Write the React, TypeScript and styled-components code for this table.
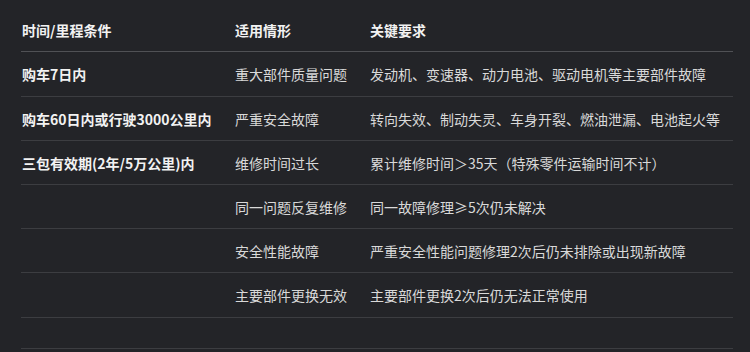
import React from 'react';
import styled, { createGlobalStyle } from 'styled-components';

const GlobalStyle = createGlobalStyle`
  html, body {
    margin: 0;
    padding: 0;
    background: #232428;
  }
  body {
    font-family: "Noto Sans CJK SC", "Noto Sans", sans-serif;
  }
`;

const Page = styled.div`
  padding: 8px 17px 0 21px;
  min-height: 352px;
  box-sizing: border-box;
  background: #232428;
`;

const Table = styled.table`
  width: 100%;
  border-collapse: collapse;
  table-layout: fixed;
  font-size: 14px;
  line-height: 20px;
`;

const HeadCell = styled.th<{ $w?: number }>`
  width: ${(p) => (p.$w ? `${p.$w}px` : 'auto')};
  height: 43px;
  padding: 0 0 0 1px;
  text-align: left;
  font-weight: 700;
  color: #f2f2f2;
  border-bottom: 1px solid #505155;
`;

const Row = styled.tr<{ $h: number }>`
  height: ${(p) => p.$h}px;
  border-bottom: 1px solid #3c3d41;
`;

const Cell = styled.td<{ $strong?: boolean }>`
  padding: 0 0 0 1px;
  vertical-align: middle;
  white-space: nowrap;
  font-weight: ${(p) => (p.$strong ? 700 : 400)};
  color: ${(p) => (p.$strong ? '#f2f2f2' : '#d9d9d9')};
`;

const rows = [
  ['购车7日内', '重大部件质量问题', '发动机、变速器、动力电池、驱动电机等主要部件故障'],
  ['购车60日内或行驶3000公里内', '严重安全故障', '转向失效、制动失灵、车身开裂、燃油泄漏、电池起火等'],
  ['三包有效期(2年/5万公里)内', '维修时间过长', '累计维修时间＞35天（特殊零件运输时间不计）'],
  ['', '同一问题反复维修', '同一故障修理≥5次仍未解决'],
  ['', '安全性能故障', '严重安全性能问题修理2次后仍未排除或出现新故障'],
  ['', '主要部件更换无效', '主要部件更换2次后仍无法正常使用'],
  ['', '', ''],
];

const heights = [45, 44, 44, 44, 44, 45, 31];

export default function App() {
  return (
    <>
      <GlobalStyle />
      <Page>
        <Table>
          <thead>
            <tr>
              <HeadCell $w={212}>时间/里程条件</HeadCell>
              <HeadCell $w={134}>适用情形</HeadCell>
              <HeadCell>关键要求</HeadCell>
            </tr>
          </thead>
          <tbody>
            {rows.map((r, i) => (
              <Row key={i} $h={heights[i]}>
                <Cell $strong>{r[0]}</Cell>
                <Cell>{r[1]}</Cell>
                <Cell>{r[2]}</Cell>
              </Row>
            ))}
          </tbody>
        </Table>
      </Page>
    </>
  );
}
